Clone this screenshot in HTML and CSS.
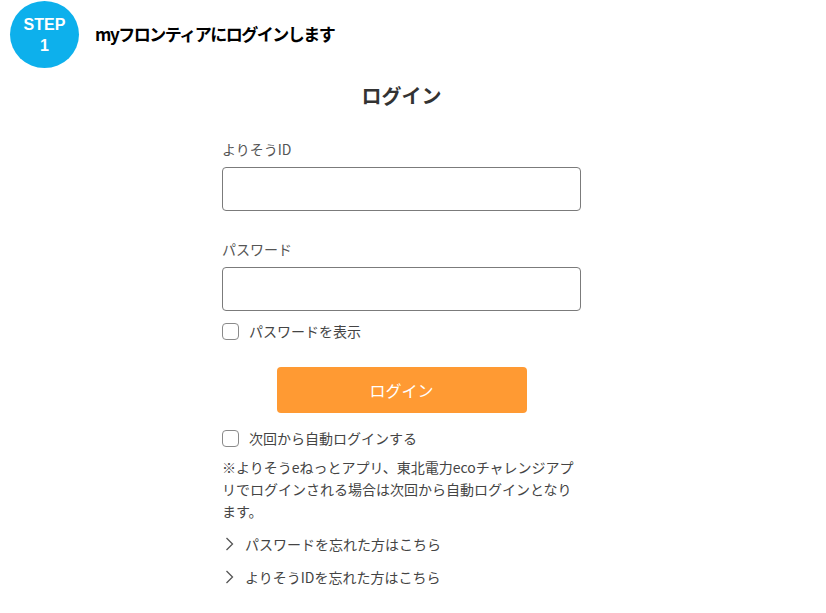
FILE: index.html
```html
<!DOCTYPE html>
<html lang="ja">
<head>
<meta charset="utf-8">
<title>STEP 1 ログイン</title>
<link rel="stylesheet" href="styles.css">
</head>
<body>
<header class="step">
  <div class="step-badge"><span>STEP</span><span>1</span></div>
  <h1 class="step-title">myフロンティアにログインします</h1>
</header>
<main class="login">
  <h2 class="login-title">ログイン</h2>
  <div class="field">
    <label class="field-label">よりそうID</label>
    <input class="field-input" type="text">
  </div>
  <div class="field field-2">
    <label class="field-label">パスワード</label>
    <input class="field-input" type="password">
  </div>
  <label class="check check-show"><input type="checkbox" class="check-box"><span>パスワードを表示</span></label>
  <div class="btn-row"><button class="btn">ログイン</button></div>
  <label class="check check-auto"><input type="checkbox" class="check-box"><span>次回から自動ログインする</span></label>
  <p class="note">※よりそうeねっとアプリ、東北電力ecoチャレンジアプリでログインされる場合は次回から自動ログインとなります。</p>
  <a class="link link-1" href="#"><svg class="chev" width="9" height="14" viewBox="0 0 9 14"><polyline points="1.5,1 7.5,7 1.5,13" fill="none" stroke="#555" stroke-width="1.3"/></svg><span>パスワードを忘れた方はこちら</span></a>
  <a class="link link-2" href="#"><svg class="chev" width="9" height="14" viewBox="0 0 9 14"><polyline points="1.5,1 7.5,7 1.5,13" fill="none" stroke="#555" stroke-width="1.3"/></svg><span>よりそうIDを忘れた方はこちら</span></a>
</main>
</body>
</html>
```
FILE: styles.css
```css
html, body {
  margin: 0;
  padding: 0;
  background: #fff;
}
body {
  font-family: "Noto Sans CJK JP", "Noto Sans", sans-serif;
  color: #333;
}
.step {
  display: flex;
  align-items: center;
  height: 70px;
  padding-left: 10px;
  box-sizing: border-box;
}
.step-badge {
  width: 69px;
  height: 67px;
  margin-top: -1px;
  border-radius: 50%;
  background: #0db0ec;
  color: #fff;
  display: flex;
  flex-direction: column;
  align-items: center;
  justify-content: center;
  font-family: "Liberation Sans", "DejaVu Sans", sans-serif;
  font-weight: bold;
  font-size: 16px;
  line-height: 21px;
}
.step-title {
  margin: -4px 0 0 16px;
  font-size: 17px;
  font-weight: bold;
  color: #000;
  letter-spacing: -1.5px;
}
.login {
  width: 359px;
  margin-left: 222px;
}
.login-title {
  margin: 12px 0 0;
  text-align: center;
  font-size: 20px;
  line-height: 28px;
  font-weight: bold;
  color: #333;
}
.field {
  margin-top: 29px;
  display: flex;
  flex-direction: column;
}
.field-2 {
  margin-top: 28px;
}
.field-label {
  font-size: 14px;
  line-height: 20px;
  color: #555;
}
.field-input {
  margin-top: 8px;
  height: 44px;
  box-sizing: border-box;
  border: 1px solid #7b7b7b;
  border-radius: 4px;
  padding: 0 10px;
  font-size: 14px;
}
.check {
  display: flex;
  align-items: center;
  height: 20px;
  font-size: 14px;
  color: #444;
}
.check-show {
  margin-top: 10px;
}
.check-box {
  appearance: none;
  -webkit-appearance: none;
  width: 17px;
  height: 17px;
  margin: 0 10px 0 0;
  border: 1.5px solid #8a8a8a;
  border-radius: 4px;
  box-sizing: border-box;
  background: #fff;
}
.btn-row {
  margin-top: 26px;
  display: flex;
  justify-content: center;
}
.btn {
  width: 250px;
  height: 46px;
  border: none;
  border-radius: 4px;
  background: #ff9a33;
  color: #fff;
  font-family: "Noto Sans CJK JP", sans-serif;
  font-size: 16px;
}
.check-auto {
  margin-top: 15px;
}
.note {
  margin: 8px 0 0;
  font-size: 14px;
  line-height: 22px;
  color: #444;
}
.link {
  display: flex;
  align-items: center;
  height: 20px;
  font-size: 14px;
  color: #444;
  text-decoration: none;
}
.link-1 {
  margin-top: 12px;
}
.link-2 {
  margin-top: 13px;
}
.chev {
  margin: 0 11px 0 3px;
}
```
